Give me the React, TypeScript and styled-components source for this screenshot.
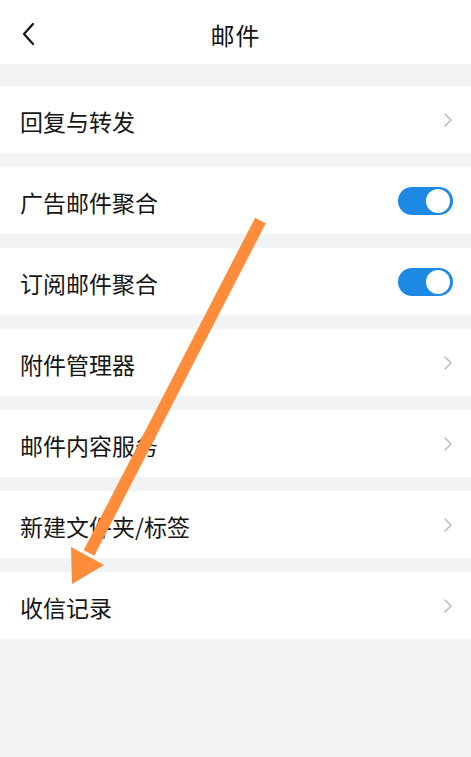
import styled, { createGlobalStyle } from "styled-components";

const GlobalStyle = createGlobalStyle`
  html, body {
    margin: 0;
    padding: 0;
    background: #f2f3f5;
  }
  body {
    font-family: "Noto Sans CJK SC", "Noto Sans", sans-serif;
  }
`;

const Page = styled.div`
  position: relative;
  width: 471px;
  height: 757px;
  overflow: hidden;
  background: #f2f3f5;
`;

const Header = styled.div`
  position: relative;
  height: 64px;
  background: #fff;
  display: flex;
  align-items: center;
  justify-content: center;
`;

const BackButton = styled.div`
  position: absolute;
  left: 18px;
  top: 20px;
  width: 20px;
  height: 28px;
  display: flex;
  align-items: center;
  justify-content: center;
`;

const Title = styled.div`
  font-size: 24px;
  color: #111;
  letter-spacing: 1px;
  margin-top: 4px;
`;

const List = styled.div`
  display: flex;
  flex-direction: column;
  gap: 14px;
  padding-top: 22px;
`;

const Row = styled.div`
  height: 67px;
  background: #fff;
  display: flex;
  align-items: center;
  justify-content: space-between;
  padding: 0 18px 0 20px;
`;

const Label = styled.span`
  font-size: 23px;
  color: #151515;
  margin-top: 2px;
`;

const Toggle = styled.div<{ on: boolean }>`
  width: 55px;
  height: 28px;
  border-radius: 14px;
  background: ${(p) => (p.on ? "#1e88e5" : "#ccc")};
  position: relative;
  &::after {
    content: "";
    position: absolute;
    top: 2px;
    right: ${(p) => (p.on ? "3px" : "auto")};
    left: ${(p) => (p.on ? "auto" : "3px")};
    width: 24px;
    height: 24px;
    border-radius: 50%;
    background: #fff;
  }
`;

const Overlay = styled.svg`
  position: absolute;
  left: 0;
  top: 0;
  pointer-events: none;
`;

const Chevron = () => (
  <svg width="10" height="16" viewBox="0 0 10 16">
    <path d="M2 2 L8 8 L2 14" fill="none" stroke="#bdbdbd" strokeWidth="1.6" strokeLinecap="round" strokeLinejoin="round" />
  </svg>
);

const rows: { label: string; toggle?: boolean }[] = [
  { label: "回复与转发" },
  { label: "广告邮件聚合", toggle: true },
  { label: "订阅邮件聚合", toggle: true },
  { label: "附件管理器" },
  { label: "邮件内容服务" },
  { label: "新建文件夹/标签" },
  { label: "收信记录" },
];

function App() {
  return (
    <Page>
      <GlobalStyle />
      <Header>
        <BackButton>
          <svg width="14" height="24" viewBox="0 0 14 24">
            <path d="M12 2 L3 12 L12 22" fill="none" stroke="#111" strokeWidth="2.2" strokeLinecap="round" strokeLinejoin="round" />
          </svg>
        </BackButton>
        <Title>邮件</Title>
      </Header>
      <List>
        {rows.map((r) => (
          <Row key={r.label}>
            <Label>{r.label}</Label>
            {r.toggle ? <Toggle on /> : <Chevron />}
          </Row>
        ))}
      </List>
      <Overlay width="471" height="757" viewBox="0 0 471 757">
        <line x1="260.5" y1="220.5" x2="89" y2="553" stroke="#ff8c3a" strokeWidth="12" />
        <polygon points="71,547 104,565 72,584" fill="#ff8c3a" />
      </Overlay>
    </Page>
  );
}

export default App;
